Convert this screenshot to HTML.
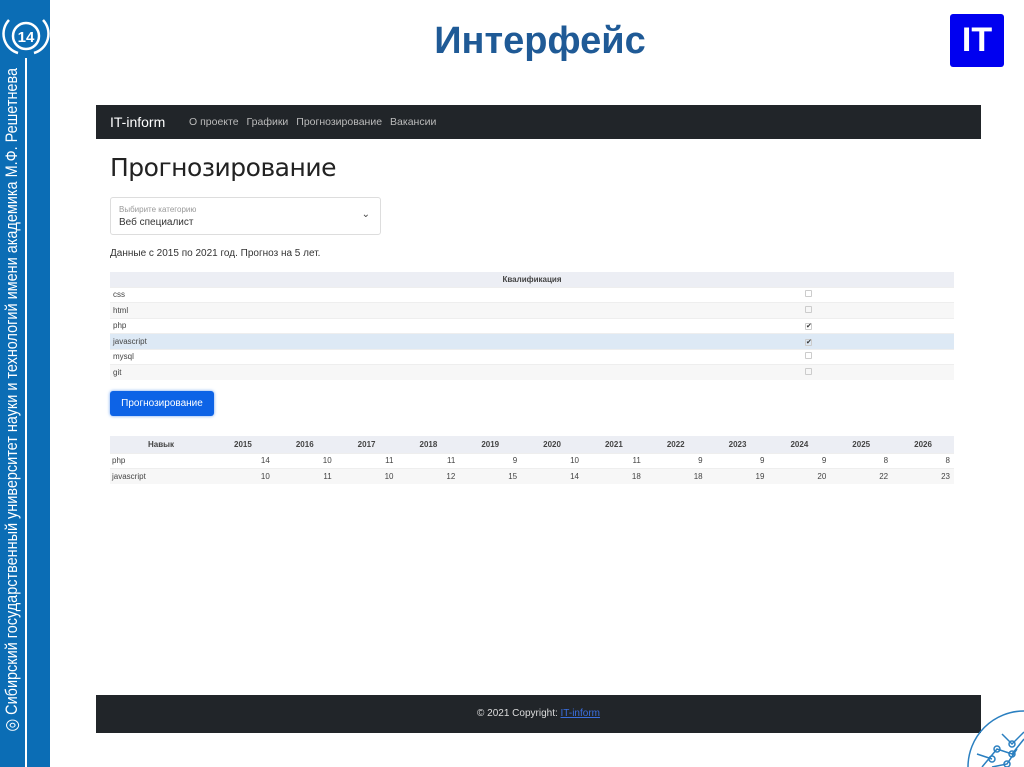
<!DOCTYPE html>
<html><head><meta charset="utf-8"><style>
*{margin:0;padding:0;box-sizing:border-box}
html,body{width:1024px;height:767px;overflow:hidden}
body{background:#fff;position:relative;font-family:"Liberation Sans",sans-serif}
.side{position:absolute;left:0;top:0;width:50px;height:767px;background:#0b6db5}
.vline{position:absolute;left:25px;top:58px;width:2px;height:709px;background:#fff}
.vtext{position:absolute;left:-333px;top:433px;width:690px;height:24px;transform:rotate(-90deg);color:#fff;font-size:17px;line-height:24px;white-space:nowrap;text-align:center;overflow:visible}
.vtext span{display:inline-block;transform:scaleX(0.85);transform-origin:center}
.title{position:absolute;left:0;width:1080px;top:20px;text-align:center;font-size:38px;font-weight:bold;color:#1f5a96}
.it{position:absolute;left:950px;top:14px;width:54px;height:53px;background:#0000f0;border-radius:3px;color:#fff;font-weight:bold;font-size:34px;text-align:center;line-height:53px}
.nav{position:absolute;left:96px;top:105px;width:885px;height:34px;background:#212529;color:#fff}
.nav .b{position:absolute;left:14px;top:9px;font-size:14px}
.nav .l{position:absolute;left:93px;top:11px;font-size:10.5px;color:#bbb}
.nav .l span{margin-right:8px}
h1{position:absolute;left:110px;top:153px;font-size:25px;font-weight:normal;color:#222;font-family:"DejaVu Sans",sans-serif;letter-spacing:-0.5px}
.sel{position:absolute;left:110px;top:197px;width:271px;height:38px;border:1px solid #ddd;border-radius:3px}
.sel .a{position:absolute;left:8px;top:7px;font-size:8px;color:#999}
.sel .v{position:absolute;left:8px;top:19px;font-size:10px;color:#333}
.sel .c{position:absolute;right:10px;top:11px;font-size:10px;color:#444}
.info{position:absolute;left:110px;top:248px;font-size:10px;color:#333}
table{position:absolute;border-collapse:collapse;font-size:8px;color:#444}
.q{left:110px;top:272px;width:844px}
.q th{height:15px;background:#eceef4;font-weight:bold;text-align:center}
.q td{height:15.5px;border-top:1px solid #eee;padding-left:3px}
.q tr:nth-child(odd) td{background:#f7f7f7}
.q tr.h td{background:#dde9f5}
.q td.cb{width:152px}
.box{display:inline-block;width:7px;height:7px;border:1px solid #ccc;border-radius:1px;font-size:7px;line-height:6px;text-align:center;color:#333}
.btn{position:absolute;left:110px;top:391px;width:104px;height:25px;background:#0d63e6;border-radius:3px;color:#fff;font-size:10px;text-align:center;line-height:25px;box-shadow:0 0 3px #6aa0f0}
.y{left:110px;top:436px;width:844px;table-layout:fixed}
.y th{height:17px;background:#eceef4;text-align:center;font-weight:bold}
.y td{height:15.5px;text-align:right;padding-right:4px;border-top:1px solid #eee}
.y tr:nth-child(3) td{background:#f7f7f7}
.y td:first-child{text-align:left;padding-left:2px}
.foot{position:absolute;left:96px;top:695px;width:885px;height:38px;background:#212529;color:#ddd;font-size:10px;text-align:center;line-height:38px}
.foot span{color:#3a6fe0;text-decoration:underline}
</style></head><body>
<div class="side"></div><div class="vline"></div>
<svg style="position:absolute;left:0;top:10px" width="52" height="50"><circle cx="26" cy="26" r="13" fill="none" stroke="#fff" stroke-width="2.5"/><path d="M9 10 A20 20 0 0 0 18 43 M43 10 A20 20 0 0 1 34 43" fill="none" stroke="#fff" stroke-width="2.5"/><text x="26" y="32" fill="#fff" font-size="15" font-weight="bold" text-anchor="middle" font-family="Liberation Sans">14</text></svg>
<div class="vtext"><span>◎ Сибирский государственный университет науки и технологий имени академика М.Ф. Решетнева</span></div>
<div class="title">Интерфейс</div>
<div class="it">IT</div>
<div class="nav"><div class="b">IT-inform</div><div class="l"><span>О проекте</span><span>Графики</span><span>Прогнозирование</span><span>Вакансии</span></div></div>
<h1>Прогнозирование</h1>
<div class="sel"><div class="a">Выбирите категорию</div><div class="v">Веб специалист</div><div class="c">⌄</div></div>
<div class="info">Данные с 2015 по 2021 год. Прогноз на 5 лет.</div>
<table class="q"><tr><th colspan="2">Квалификация</th></tr>
<tr><td>css</td><td class="cb"><span class="box"></span></td></tr>
<tr><td>html</td><td class="cb"><span class="box"></span></td></tr>
<tr><td>php</td><td class="cb"><span class="box">✔</span></td></tr>
<tr class="h"><td>javascript</td><td class="cb"><span class="box">✔</span></td></tr>
<tr><td>mysql</td><td class="cb"><span class="box"></span></td></tr>
<tr><td>git</td><td class="cb"><span class="box"></span></td></tr></table>
<div class="btn">Прогнозирование</div>
<table class="y"><colgroup><col style="width:102px"><col span="12"></colgroup>
<tr><th>Навык</th><th>2015</th><th>2016</th><th>2017</th><th>2018</th><th>2019</th><th>2020</th><th>2021</th><th>2022</th><th>2023</th><th>2024</th><th>2025</th><th>2026</th></tr>
<tr><td>php</td><td>14</td><td>10</td><td>11</td><td>11</td><td>9</td><td>10</td><td>11</td><td>9</td><td>9</td><td>9</td><td>8</td><td>8</td></tr>
<tr><td>javascript</td><td>10</td><td>11</td><td>10</td><td>12</td><td>15</td><td>14</td><td>18</td><td>18</td><td>19</td><td>20</td><td>22</td><td>23</td></tr></table>
<div class="foot">© 2021 Copyright: <span>IT-inform</span></div>
<svg style="position:absolute;left:962px;top:704px" width="62" height="63"><g fill="none" stroke="#2a7fc0" stroke-width="1.5"><circle cx="62" cy="63" r="56"/><path d="M20 63 L35 45 L50 50 L62 35 M30 63 L45 60 L55 45 M40 30 L50 40 L62 28 M15 50 L30 55"/><circle cx="35" cy="45" r="3"/><circle cx="50" cy="50" r="3"/><circle cx="45" cy="60" r="3"/><circle cx="50" cy="40" r="3"/><circle cx="30" cy="55" r="3"/></g></svg>
</body></html>
